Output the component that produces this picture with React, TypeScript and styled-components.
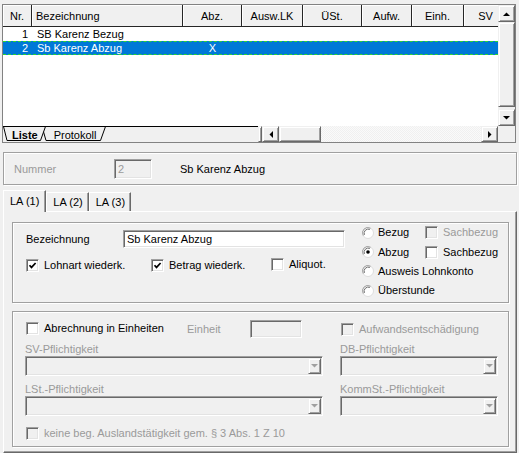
import React from 'react';
import styled, { createGlobalStyle, css } from 'styled-components';

const GlobalStyle = createGlobalStyle`
  html, body {
    margin: 0;
    padding: 0;
    background: #f0f0f0;
  }
  body {
    font-family: "Liberation Sans", Arial, sans-serif;
    font-size: 11px;
    color: #000;
  }
  * {
    box-sizing: border-box;
  }
`;

const raised = css`
  background: #f0f0f0;
  border: 1px solid;
  border-color: #f0f0f0 #696969 #696969 #f0f0f0;
  box-shadow: inset 1px 1px #fff, inset -1px -1px #a0a0a0;
`;

const sunken = css`
  border: 1px solid;
  border-color: #a0a0a0 #fff #fff #a0a0a0;
  box-shadow: inset 1px 1px #696969, inset -1px -1px #e3e3e3;
`;

const etched = css`
  border: 1px solid #a0a0a0;
  box-shadow: inset 1px 1px #fff, 1px 1px #fff;
`;

const DISABLED = '#9a9a9a';
const COLS = '29px 151px 59px 61px 59px 50px 52px 44px';

const Window = styled.div`
  width: 519px;
  height: 453px;
  overflow: hidden;
  display: flex;
  flex-direction: column;
`;

/* ---------- list grid ---------- */

const GridPanel = styled.div`
  margin: 4px 0 0 2px;
  width: 514px;
  height: 139px;
  border: 1px solid #828282;
  display: grid;
  grid-template-columns: 495px 17px;
  grid-template-rows: 121px 16px;
  background: #fff;
`;

const Table = styled.div`
  overflow: hidden;
`;

const HeaderRow = styled.div`
  display: grid;
  grid-template-columns: ${COLS};
  height: 22px;
`;

const HeaderCell = styled.div<{ $align?: 'left' | 'center' }>`
  display: flex;
  align-items: center;
  justify-content: ${(p) => (p.$align === 'left' ? 'flex-start' : 'center')};
  padding: 0 4px;
  background: #f0f0f0;
  border-right: 1px solid #262626;
  border-bottom: 1px solid #262626;
  box-shadow: inset 1px 1px #fff;
  white-space: nowrap;
`;

const DataRow = styled.div<{ $selected?: boolean }>`
  display: grid;
  grid-template-columns: ${COLS};
  height: 14px;
  line-height: 12px;
  border-top: 1px ${(p) => (p.$selected ? 'dashed #2fd82f' : 'solid transparent')};
  border-bottom: 1px ${(p) => (p.$selected ? 'dashed #2fd82f' : 'solid transparent')};
  background: ${(p) => (p.$selected ? '#0078d7' : 'transparent')};
  color: ${(p) => (p.$selected ? '#fff' : '#000')};
`;

const Cell = styled.div<{ $align?: 'left' | 'right' | 'center' }>`
  text-align: ${(p) => p.$align ?? 'left'};
  padding: ${(p) => (p.$align === 'right' ? '0 4px 0 0' : p.$align === 'center' ? '0' : '0 0 0 5px')};
  white-space: nowrap;
  overflow: hidden;
`;

const VScroll = styled.div`
  display: flex;
  flex-direction: column;
  background: #f0f0f0;
`;

const ScrollButton = styled.div`
  ${raised};
  width: 17px;
  height: 17px;
  flex: none;
  display: flex;
  align-items: center;
  justify-content: center;
`;

const VThumb = styled.div`
  ${raised};
  flex: 1;
  margin-bottom: 2px;
`;

const SheetBar = styled.div`
  display: flex;
  height: 16px;
  background: #f0f0f0;
`;

const SheetTabs = styled.div`
  position: relative;
  width: 255px;
  display: flex;
  align-items: center;
  height: 16px;
`;

const SheetOutline = styled.svg`
  position: absolute;
  left: 0;
  top: 0;
`;

const SheetLabel = styled.span<{ $active?: boolean; $offset: number }>`
  position: relative;
  padding-left: ${(p) => p.$offset}px;
  font-weight: ${(p) => (p.$active ? 700 : 400)};
  line-height: 14px;
  margin-top: 1px;
`;

const Splitter = styled.div`
  ${raised};
  width: 4px;
`;

const HScroll = styled.div`
  flex: 1;
  display: flex;
`;

const HThumb = styled.div`
  ${raised};
  width: 42px;
  height: 16px;
`;

const Track = styled.div`
  flex: 1;
  background: repeating-conic-gradient(#f0f0f0 0 25%, #fafafa 0 50%) 0 0 / 2px 2px;
`;

const HButton = styled(ScrollButton)`
  height: 16px;
`;

const Corner = styled.div`
  background: #f0f0f0;
`;

/* ---------- number bar ---------- */

const NumberPanel = styled.div`
  ${etched};
  margin: 9px 0 0 3px;
  width: 514px;
  height: 33px;
  display: flex;
  align-items: center;
`;

const NumberLabel = styled.span`
  width: 110px;
  padding-left: 10px;
  color: ${DISABLED};
`;

const TextField = styled.div<{ $disabled?: boolean; $width: number; $height: number }>`
  ${sunken};
  width: ${(p) => p.$width}px;
  height: ${(p) => p.$height}px;
  background: ${(p) => (p.$disabled ? '#f0f0f0' : '#fff')};
  color: ${(p) => (p.$disabled ? DISABLED : '#000')};
  padding: 0 3px;
  display: flex;
  align-items: center;
  flex: none;
`;

const NumberName = styled.span`
  margin-left: 28px;
`;

/* ---------- tab control ---------- */

const TabRow = styled.div`
  margin: 5px 0 0 3px;
  height: 22px;
  display: flex;
  align-items: flex-end;
  position: relative;
  z-index: 1;
`;

const Tab = styled.div<{ $active?: boolean }>`
  height: ${(p) => (p.$active ? 22 : 19)}px;
  margin-bottom: ${(p) => (p.$active ? 0 : 1)}px;
  padding: ${(p) => (p.$active ? '3px 6px 0' : '2px 5px 0 6px')};
  background: #f0f0f0;
  border-top: 1px solid #fff;
  border-left: 1px solid #fff;
  border-right: 1px solid #696969;
  box-shadow: inset -1px 0 #a0a0a0;
  line-height: 14px;
`;

const TabPane = styled.div`
  margin: -1px 0 0 3px;
  width: 514px;
  flex: 1;
  border: 1px solid;
  border-color: #fff #696969 #696969 #fff;
  box-shadow: inset -1px -1px #a0a0a0;
  padding: 10px 0 0 8px;
`;

const GroupBox = styled.div<{ $height: number; $gap?: number }>`
  ${etched};
  width: 497px;
  height: ${(p) => p.$height}px;
  margin-top: ${(p) => p.$gap ?? 0}px;
`;

const MainGroup = styled(GroupBox)`
  display: flex;
`;

const NameColumn = styled.div`
  padding: 7px 0 0 13px;
  display: flex;
  flex-direction: column;
`;

const FieldRow = styled.div`
  display: flex;
  align-items: center;
`;

const FieldLabel = styled.span<{ $width: number; $disabled?: boolean }>`
  width: ${(p) => p.$width}px;
  flex: none;
  color: ${(p) => (p.$disabled ? DISABLED : '#000')};
  white-space: nowrap;
`;

const CheckRow = styled.div`
  display: flex;
  margin-top: 10px;
  height: 14px;
  align-items: center;
`;

const CheckSlot = styled.div<{ $width?: number }>`
  width: ${(p) => (p.$width ? `${p.$width}px` : 'auto')};
  flex: none;
`;

const KindGrid = styled.div`
  margin-left: 17px;
  display: grid;
  grid-template-columns: 63px auto;
  grid-auto-rows: 19.5px;
  align-items: center;
`;

const WideCell = styled.div`
  grid-column: 1 / span 2;
`;

const UnitsGroup = styled(GroupBox)`
  display: grid;
  grid-template-columns: 298px 158px;
  grid-template-rows: 18px 18px 20px 20px 20px auto;
  column-gap: 17px;
  padding: 8px 0 0 12px;
`;

const InlineRow = styled.div`
  display: flex;
  align-items: center;
  padding-left: 1px;
`;

const ComboLabel = styled.div`
  display: flex;
  align-items: flex-end;
  color: ${DISABLED};
  line-height: 13px;
`;

const Combo = styled.div`
  ${sunken};
  background: #f0f0f0;
  display: flex;
  justify-content: flex-end;
  align-items: center;
  padding: 0 1px 0 0;
`;

const ComboButton = styled.div`
  ${raised};
  width: 13px;
  height: 16px;
  display: flex;
  align-items: center;
  justify-content: center;
`;

const FootRow = styled.div`
  grid-column: 1 / span 2;
  margin-top: 11px;
  padding-left: 1px;
`;

/* ---------- controls ---------- */

const CheckLabel = styled.label<{ $disabled?: boolean; $gap?: number }>`
  display: inline-flex;
  align-items: center;
  gap: ${(p) => p.$gap ?? 5}px;
  color: ${(p) => (p.$disabled ? DISABLED : '#000')};
  white-space: nowrap;
  line-height: 13px;
`;

const Box = styled.span<{ $disabled?: boolean }>`
  width: 13px;
  height: 13px;
  flex: none;
  border: 1px solid;
  border-color: #a0a0a0 #fff #fff #a0a0a0;
  box-shadow: inset 1px 1px #696969, inset -1px -1px #e3e3e3;
  background: ${(p) => (p.$disabled ? '#f0f0f0' : '#fff')};
  display: flex;
  align-items: center;
  justify-content: center;
`;

const RadioIcon = styled.svg`
  flex: none;
  display: block;
`;

type ArrowDir = 'up' | 'down' | 'left' | 'right';

const Arrow = ({ dir, color = '#000' }: { dir: ArrowDir; color?: string }) => {
  const pts: Record<ArrowDir, string> = {
    up: '0,4 7,4 3.5,0.5',
    down: '0,0 7,0 3.5,3.5',
    left: '4,0 4,7 0.5,3.5',
    right: '0,0 0,7 3.5,3.5',
  };
  const vertical = dir === 'up' || dir === 'down';
  return (
    <svg width={vertical ? 7 : 4} height={vertical ? 4 : 7} viewBox={vertical ? '0 0 7 4' : '0 0 4 7'}>
      <polygon points={pts[dir]} fill={color} />
    </svg>
  );
};

const CheckBox = ({ label, checked, disabled }: { label: string; checked?: boolean; disabled?: boolean }) => (
  <CheckLabel $disabled={disabled}>
    <Box $disabled={disabled}>
      {checked && (
        <svg width="9" height="9" viewBox="0 0 9 9">
          <path d="M1.5 4.2 L3.5 6.4 L7.6 2" stroke="#000" strokeWidth="1.7" fill="none" />
        </svg>
      )}
    </Box>
    {label}
  </CheckLabel>
);

const Radio = ({ label, checked }: { label: string; checked?: boolean }) => (
  <CheckLabel $gap={4}>
    <RadioIcon width="12" height="12" viewBox="0 0 12 12">
      <circle cx="6" cy="6" r="5.5" fill="#fff" stroke="#dcdcdc" />
      <path d="M1.3 8.6 A5.3 5.3 0 0 1 8.6 1.3" stroke="#a0a0a0" fill="none" />
      <path d="M2.4 7.9 A4.2 4.2 0 0 1 7.9 2.4" stroke="#696969" fill="none" />
      {checked && <circle cx="6" cy="6" r="1.8" fill="#000" />}
    </RadioIcon>
    {label}
  </CheckLabel>
);

const DropDown = () => (
  <Combo>
    <ComboButton>
      <Arrow dir="down" color="#a0a0a0" />
    </ComboButton>
  </Combo>
);

const rows = [
  { nr: 1, name: 'SB Karenz Bezug', abz: '' },
  { nr: 2, name: 'Sb Karenz Abzug', abz: 'X' },
];

const headers = ['Abz.', 'Ausw.LK', 'ÜSt.', 'Aufw.', 'Einh.'];

export default function App() {
  return (
    <>
      <GlobalStyle />
      <Window>
        <GridPanel>
          <Table>
            <HeaderRow>
              <HeaderCell>Nr.</HeaderCell>
              <HeaderCell $align="left">Bezeichnung</HeaderCell>
              {headers.map((h) => (
                <HeaderCell key={h}>{h}</HeaderCell>
              ))}
              <HeaderCell>SV</HeaderCell>
            </HeaderRow>
            {rows.map((r) => (
              <DataRow key={r.nr} $selected={r.nr === 2}>
                <Cell $align="right">{r.nr}</Cell>
                <Cell>{r.name}</Cell>
                <Cell $align="center">{r.abz}</Cell>
              </DataRow>
            ))}
          </Table>
          <VScroll>
            <ScrollButton>
              <Arrow dir="up" />
            </ScrollButton>
            <VThumb />
            <ScrollButton>
              <Arrow dir="down" />
            </ScrollButton>
          </VScroll>
          <SheetBar>
            <SheetTabs>
              <SheetOutline width="255" height="16" viewBox="0 0 255 16">
                <path d="M39 0.5 L43 14.5 H97.5 L102.5 0.5" stroke="#000" fill="#f0f0f0" />
                <path d="M0.5 0.5 L4 14.5 H37.5 L42.5 0.5" stroke="#000" fill="#f0f0f0" />
                <path d="M0 0.5 H255" stroke="#000" />
              </SheetOutline>
              <SheetLabel $active $offset={9}>
                Liste
              </SheetLabel>
              <SheetLabel $offset={16}>Protokoll</SheetLabel>
            </SheetTabs>
            <Splitter />
            <HScroll>
              <HButton>
                <Arrow dir="left" />
              </HButton>
              <HThumb />
              <Track />
              <HButton>
                <Arrow dir="right" />
              </HButton>
            </HScroll>
          </SheetBar>
          <Corner />
        </GridPanel>

        <NumberPanel>
          <NumberLabel>Nummer</NumberLabel>
          <TextField $disabled $width={38} $height={20}>
            2
          </TextField>
          <NumberName>Sb Karenz Abzug</NumberName>
        </NumberPanel>

        <TabRow>
          <Tab $active>LA (1)</Tab>
          <Tab>LA (2)</Tab>
          <Tab>LA (3)</Tab>
        </TabRow>
        <TabPane>
          <MainGroup $height={81}>
            <NameColumn>
              <FieldRow>
                <FieldLabel $width={97}>Bezeichnung</FieldLabel>
                <TextField $width={222} $height={18}>
                  Sb Karenz Abzug
                </TextField>
              </FieldRow>
              <CheckRow>
                <CheckSlot $width={125}>
                  <CheckBox label="Lohnart wiederk." checked />
                </CheckSlot>
                <CheckSlot $width={120}>
                  <CheckBox label="Betrag wiederk." checked />
                </CheckSlot>
                <CheckSlot>
                  <CheckBox label="Aliquot." />
                </CheckSlot>
              </CheckRow>
            </NameColumn>
            <KindGrid>
              <Radio label="Bezug" />
              <CheckBox label="Sachbezug" disabled />
              <Radio label="Abzug" checked />
              <CheckBox label="Sachbezug" />
              <WideCell>
                <Radio label="Ausweis Lohnkonto" />
              </WideCell>
              <WideCell>
                <Radio label="Überstunde" />
              </WideCell>
            </KindGrid>
          </MainGroup>

          <UnitsGroup $height={136} $gap={8}>
            <InlineRow>
              <CheckSlot $width={161}>
                <CheckBox label="Abrechnung in Einheiten" />
              </CheckSlot>
              <FieldLabel $width={63} $disabled>
                Einheit
              </FieldLabel>
              <TextField $disabled $width={52} $height={18} />
            </InlineRow>
            <InlineRow>
              <CheckBox label="Aufwandsentschädigung" disabled />
            </InlineRow>
            <ComboLabel>SV-Pflichtigkeit</ComboLabel>
            <ComboLabel>DB-Pflichtigkeit</ComboLabel>
            <DropDown />
            <DropDown />
            <ComboLabel>LSt.-Pflichtigkeit</ComboLabel>
            <ComboLabel>KommSt.-Pflichtigkeit</ComboLabel>
            <DropDown />
            <DropDown />
            <FootRow>
              <CheckBox label="keine beg. Auslandstätigkeit gem. § 3 Abs. 1 Z 10" disabled />
            </FootRow>
          </UnitsGroup>
        </TabPane>
      </Window>
    </>
  );
}
